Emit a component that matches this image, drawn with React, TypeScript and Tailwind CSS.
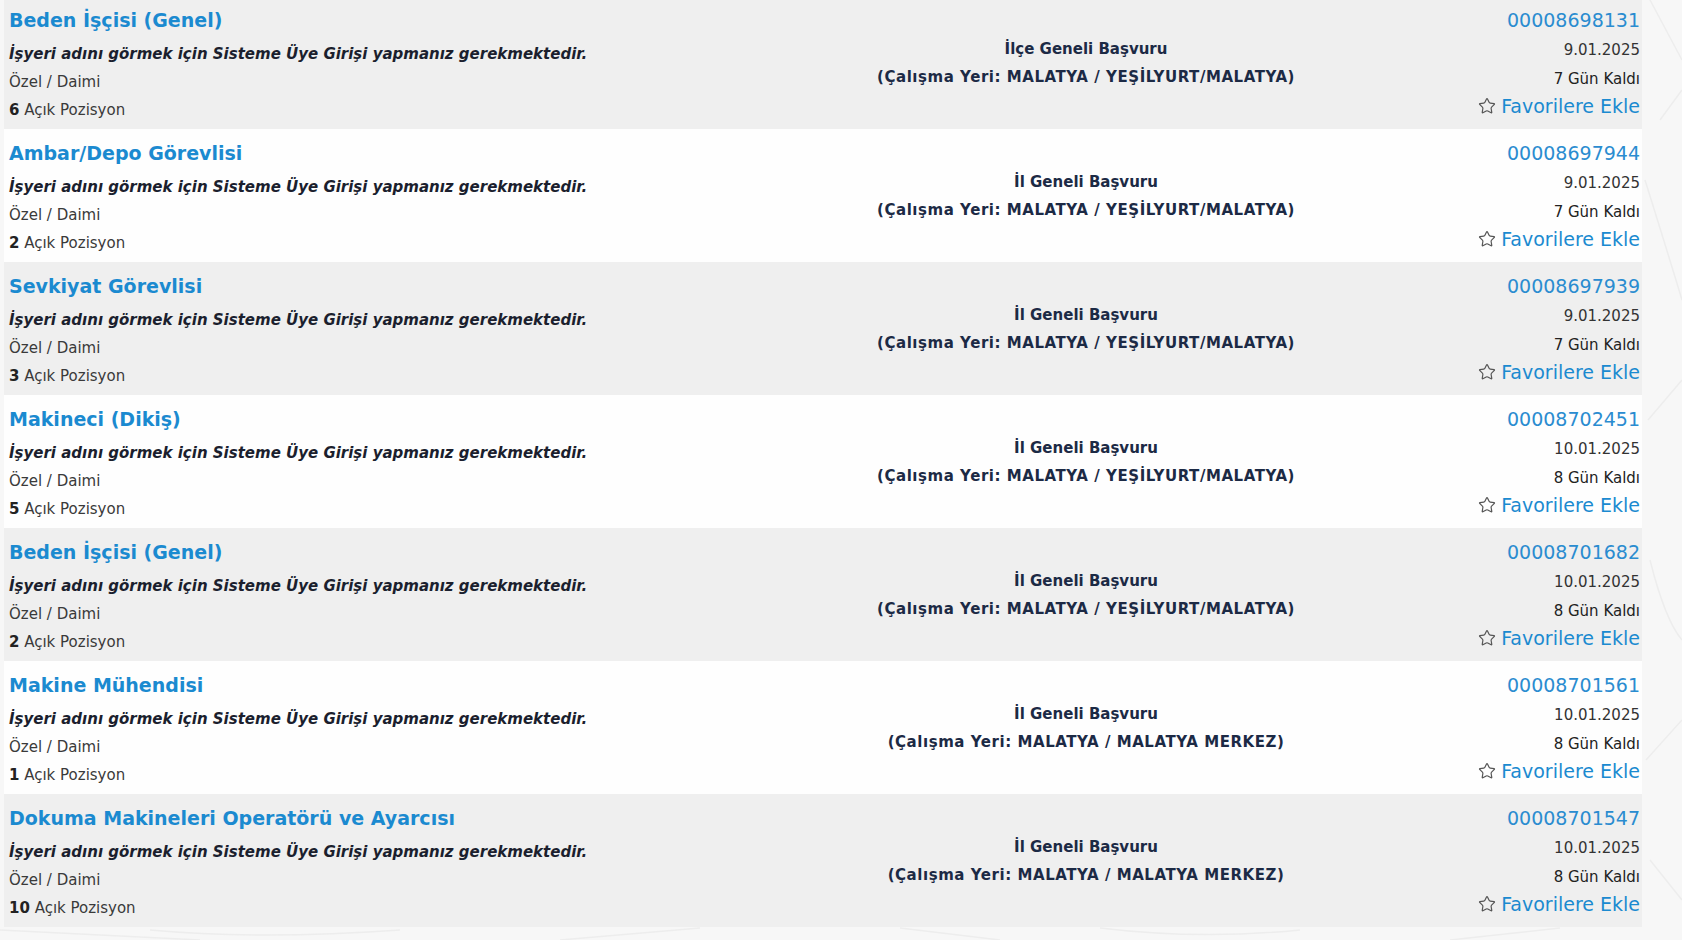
import React from 'react';
import { Star } from 'lucide-react';

type Ilan = {
    title: string;
    no: string;
    date: string;
    daysLeft: number;
    positions: number;
    scope: string;
    place: string;
};

const ilanlar: Ilan[] = [
    { title: 'Beden İşçisi (Genel)', no: '00008698131', date: '9.01.2025', daysLeft: 7, positions: 6, scope: 'İlçe Geneli Başvuru', place: 'MALATYA / YEŞİLYURT/MALATYA' },
    { title: 'Ambar/Depo Görevlisi', no: '00008697944', date: '9.01.2025', daysLeft: 7, positions: 2, scope: 'İl Geneli Başvuru', place: 'MALATYA / YEŞİLYURT/MALATYA' },
    { title: 'Sevkiyat Görevlisi', no: '00008697939', date: '9.01.2025', daysLeft: 7, positions: 3, scope: 'İl Geneli Başvuru', place: 'MALATYA / YEŞİLYURT/MALATYA' },
    { title: 'Makineci (Dikiş)', no: '00008702451', date: '10.01.2025', daysLeft: 8, positions: 5, scope: 'İl Geneli Başvuru', place: 'MALATYA / YEŞİLYURT/MALATYA' },
    { title: 'Beden İşçisi (Genel)', no: '00008701682', date: '10.01.2025', daysLeft: 8, positions: 2, scope: 'İl Geneli Başvuru', place: 'MALATYA / YEŞİLYURT/MALATYA' },
    { title: 'Makine Mühendisi', no: '00008701561', date: '10.01.2025', daysLeft: 8, positions: 1, scope: 'İl Geneli Başvuru', place: 'MALATYA / MALATYA MERKEZ' },
    { title: 'Dokuma Makineleri Operatörü ve Ayarcısı', no: '00008701547', date: '10.01.2025', daysLeft: 8, positions: 10, scope: 'İl Geneli Başvuru', place: 'MALATYA / MALATYA MERKEZ' },
];

const verdana = "font-['DejaVu_Sans',Verdana,sans-serif]";

// arka plandaki silik desen
const Desen = () => (
    <svg className="absolute inset-0 w-full h-full" viewBox="0 0 1682 940" preserveAspectRatio="none" fill="none" stroke="#ededed" strokeWidth="1.5">
        <path d="M1650 0 L1682 60 M1660 120 L1682 90 M1645 180 Q1670 260 1682 300 M1648 420 L1682 380 M1650 560 Q1665 620 1682 640 M1646 760 L1682 720 M1650 860 L1682 900" />
        <path d="M0 930 L200 940 M150 930 Q260 940 400 930 M560 940 L700 928 M900 928 L1000 940 M1100 928 Q1200 940 1300 930 M1450 940 L1560 928" />
    </svg>
);

const IlanRow = ({ ilan, odd }: { ilan: Ilan; odd: boolean }) => (
    <div className={`grid grid-cols-[862px_430px_1fr] h-[133px] pl-[5px] pr-[2px] ${odd ? 'bg-[#efefef]' : 'bg-white/90'}`}>
        {/* sol: başlık + firma */}
        <div className="pt-[10px] min-w-0">
            <a className={`${verdana} block text-[19px] leading-[28px] font-bold text-[#1b8ad0] whitespace-nowrap`}>
                {ilan.title}
            </a>
            <p className={`${verdana} mt-[6px] text-[15px] leading-[28px] font-bold italic text-[#1b1f2e] whitespace-nowrap`}>
                İşyeri adını görmek için Sisteme Üye Girişi yapmanız gerekmektedir.
            </p>
            <p className={`${verdana} text-[15px] leading-[28px] text-[#3a3a3a]`}>Özel / Daimi</p>
            <p className={`${verdana} text-[15px] leading-[28px] text-[#3a3a3a]`}>
                <b className="text-[#222]">{ilan.positions}</b> Açık Pozisyon
            </p>
        </div>

        {/* orta: başvuru kapsamı */}
        <div className={`${verdana} flex flex-col items-center justify-center text-center text-[15px] leading-[28px] font-bold text-[#1c2a45] whitespace-nowrap`}>
            <span>{ilan.scope}</span>
            <span className="tracking-[0.55px]">(Çalışma Yeri: {ilan.place})</span>
        </div>

        {/* sağ: ilan no, tarih */}
        <div className="pt-[10px] flex flex-col items-end">
            <span className={`${verdana} text-[19px] leading-[28px] text-[#2a8cd0]`}>{ilan.no}</span>
            <span className={`${verdana} mt-[2px] text-[15px] leading-[28px] text-[#333]`}>{ilan.date}</span>
            <span className={`${verdana} mt-[1px] text-[15px] leading-[28px] text-[#222]`}>{ilan.daysLeft} Gün Kaldı</span>
            <span className={`${verdana} -mt-[1px] flex items-center gap-[5px] text-[19px] leading-[28px] text-[#1b8ad0]`}>
                <Star className="w-[18px] h-[18px] text-[#555]" strokeWidth={1.6} />
                Favorilere Ekle
            </span>
        </div>
    </div>
);

export default function App() {
    return (
        <div className="relative min-h-screen h-[940px] overflow-hidden bg-[#f7f7f7]">
            <Desen />
            <div className="relative w-[1638px] ml-[4px] -mt-[4px]">
                {ilanlar.map((ilan, i) => (
                    <IlanRow key={ilan.no} ilan={ilan} odd={i % 2 === 0} />
                ))}
            </div>
        </div>
    );
}
